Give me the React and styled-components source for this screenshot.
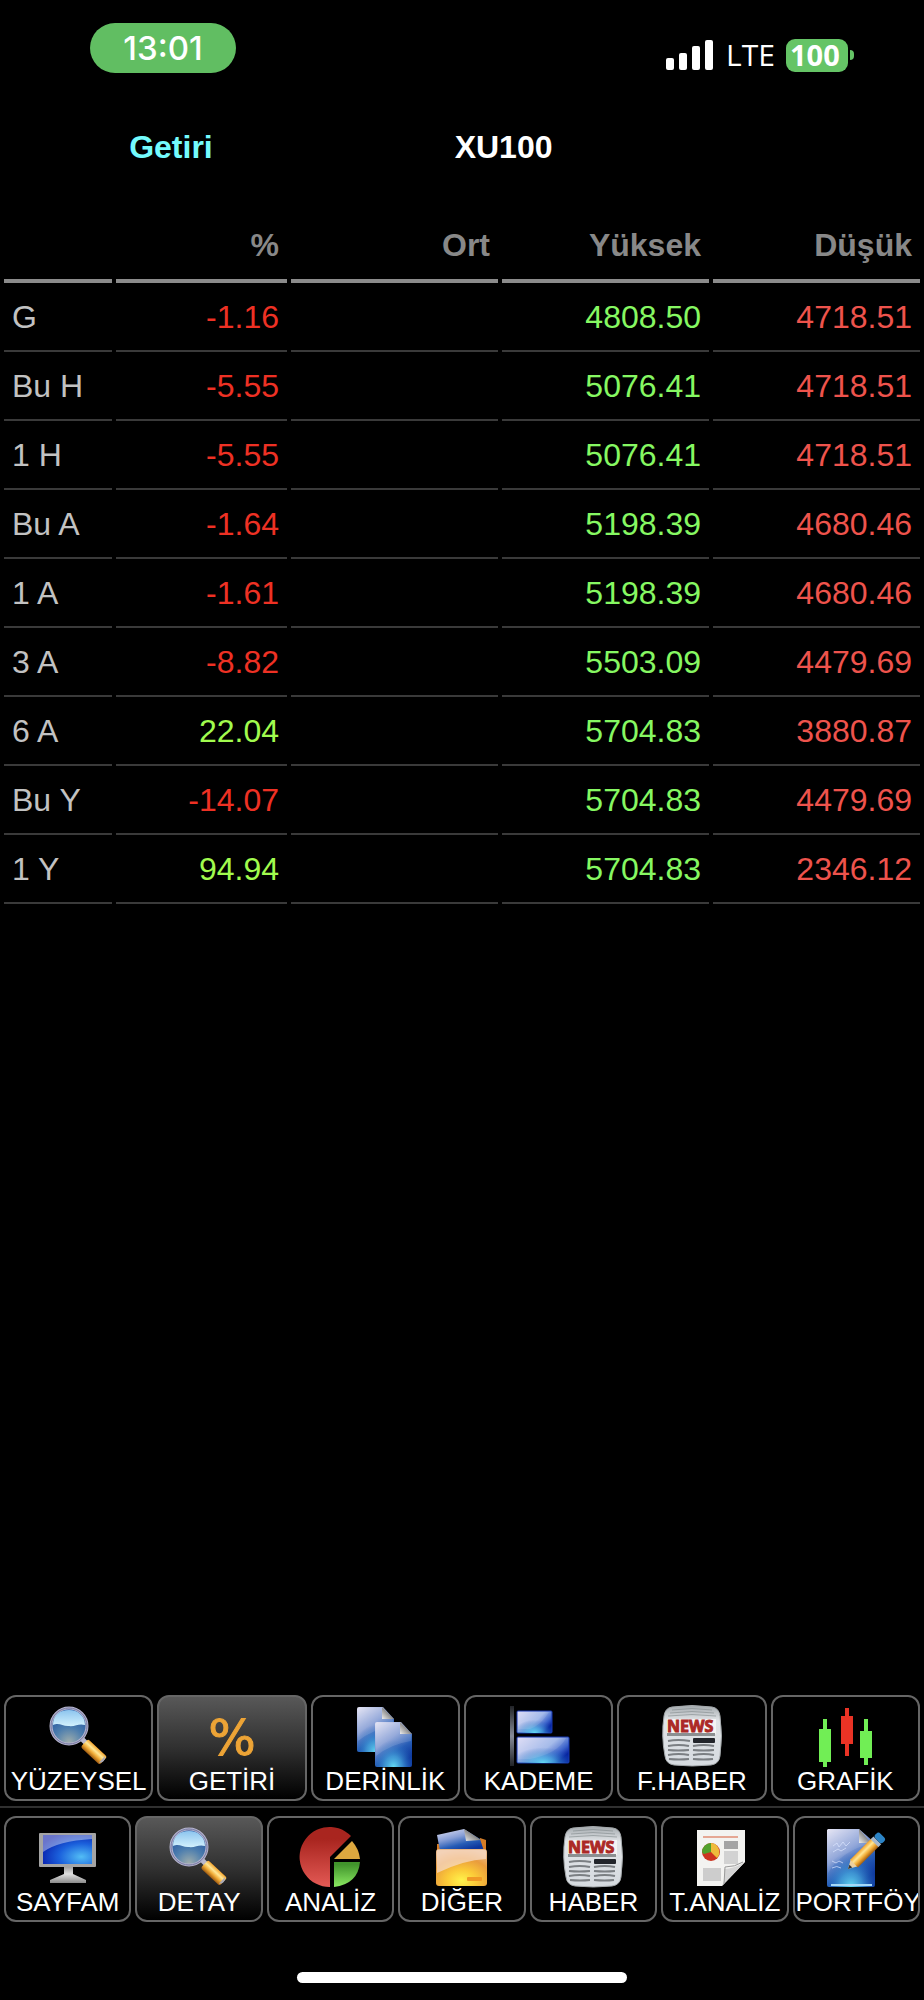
import React from "react";
import styled, { createGlobalStyle } from "styled-components";

const GlobalStyle = createGlobalStyle`
  * { box-sizing: border-box; }
  body {
    margin: 0;
    background: #000;
    color: #fff;
    font-family: "Liberation Sans", Arial, sans-serif;
  }
`;

const Screen = styled.div`
  display: flex;
  flex-direction: column;
  min-height: 100vh;
  padding-bottom: 17px;
`;

const StatusBar = styled.div`
  display: flex;
  justify-content: space-between;
  align-items: flex-start;
  height: 112px;
  padding: 23px 70px 0 90px;
  font-family: Inter, sans-serif;
`;

const Clock = styled.time`
  display: flex;
  align-items: center;
  justify-content: center;
  width: 146px;
  height: 50px;
  border-radius: 25px;
  background: #61be62;
  font-size: 33px;
  font-weight: 500;
`;

const StatusItems = styled.div`
  display: flex;
  align-items: center;
  padding-top: 15px;
`;

const SignalBars = styled.svg`
  width: 48px;
  height: 32px;
  margin-right: 12px;
`;

const Network = styled.span`
  width: 60px;
  font-family: "Open Sans", sans-serif;
  font-size: 30px;
  font-weight: 500;
  line-height: 34px;
`;

const Battery = styled.span`
  height: 33px;
  width: 62px;
  padding-left: 4px;
  border-radius: 9px;
  background: #65c466;
  font-family: "Open Sans", sans-serif;
  font-size: 29px;
  font-weight: 700;
  line-height: 32px;
`;

const BatteryTip = styled.span`
  width: 4px;
  height: 10px;
  margin-left: 2px;
  border-radius: 0 4px 4px 0;
  background: #65c466;
`;

const TitleBar = styled.header`
  display: grid;
  grid-template-columns: 37% 35% 28%;
  justify-items: center;
  align-items: center;
  height: 70px;
  line-height: 38px;
`;

const BackLink = styled.a`
  color: #74fbfd;
  font-size: 32px;
  font-weight: 700;
  text-decoration: none;
`;

const Title = styled.h1`
  margin: 0;
  font-size: 32px;
  font-weight: 700;
`;

const ReturnsTable = styled.table`
  width: 100%;
  margin-top: 30px;
  table-layout: fixed;
  border-collapse: separate;
  border-spacing: 4px 0;
  font-size: 32px;
  line-height: 37px;
`;

const Column = styled.col`
  width: ${(p) => p.$share};
`;

const HeadCell = styled.th`
  height: 71px;
  padding: 0 8px;
  border-bottom: 4px solid #8b8b8b;
  color: #888;
  text-align: right;
  vertical-align: middle;
`;

const PeriodCell = styled.th`
  height: 69px;
  padding: 2px 8px 0;
  border-bottom: 2px solid #3a3a3a;
  color: #c2c2c2;
  font-weight: 400;
  text-align: left;
  white-space: nowrap;
`;

const tones = {
  down: "#ee3124",
  up: "#a1fb4e",
  high: "#86f862",
  low: "#ee534c",
};

const ValueCell = styled.td`
  height: 69px;
  padding: 2px 8px 0;
  border-bottom: 2px solid #3a3a3a;
  color: ${(p) => tones[p.$tone] || "inherit"};
  text-align: right;
`;

const Navigation = styled.div`
  margin-top: auto;
`;

const Toolbar = styled.nav`
  display: flex;
  gap: 4px;
  padding: 0 4px;
`;

const Divider = styled.hr`
  height: 2px;
  margin: 5px 0 8px;
  border: 0;
  background: #303030;
`;

const ToolButton = styled.button`
  display: flex;
  flex: 1 1 0;
  flex-direction: column;
  align-items: center;
  min-width: 0;
  height: 106px;
  padding: 8px 0 0;
  overflow: hidden;
  border: 2px solid #666;
  border-radius: 12px;
  background: ${(p) => (p.$active ? "linear-gradient(#585858, #303030 50%, #000)" : "#000")};
  color: #fff;
  font: inherit;
`;

const ToolLabel = styled.span`
  width: 100%;
  padding: 0 1px;
  font-size: 26px;
  line-height: 30px;
  text-align: center;
  white-space: nowrap;
`;

const IconArt = styled.svg`
  display: block;
  flex: none;
  width: 60px;
  height: 61px;
  overflow: visible;
`;

const PercentMark = styled.span`
  height: 61px;
  color: #eda436;
  font-family: "DejaVu Sans", sans-serif;
  font-size: 50px;
  line-height: 66px;
  -webkit-text-stroke: 1px #eda436;
`;

const HomeIndicator = styled.div`
  width: 330px;
  height: 11px;
  margin: 50px auto 0;
  border-radius: 6px;
  background: #fff;
`;

const Icon = ({ children }) => (
  <IconArt viewBox="0 0 60 61" aria-hidden="true">{children}</IconArt>
);

const SharedGradients = () => (
  <svg width="0" height="0" display="block" aria-hidden="true">
    <defs>
      <linearGradient id="sky" x1="0" y1="0" x2="0" y2="1">
        <stop offset="0" stopColor="#8cc4ee" />
        <stop offset="1" stopColor="#d2f1fd" />
      </linearGradient>
      <radialGradient id="lens" cx="0.5" cy="0.95" r="0.9">
        <stop offset="0" stopColor="#a0aeac" />
        <stop offset="0.45" stopColor="#4d7eae" />
        <stop offset="1" stopColor="#1d4c9c" />
      </radialGradient>
      <linearGradient id="handle" x1="0" y1="0" x2="0" y2="1">
        <stop offset="0" stopColor="#f3a32c" />
        <stop offset="0.35" stopColor="#ffe795" />
        <stop offset="0.65" stopColor="#f1ac37" />
        <stop offset="1" stopColor="#9f5b11" />
      </linearGradient>
      <linearGradient id="bluePage" x1="0" y1="0" x2="0.55" y2="1">
        <stop offset="0" stopColor="#e5e4f4" />
        <stop offset="0.45" stopColor="#889fd6" />
        <stop offset="0.75" stopColor="#265cb5" />
        <stop offset="1" stopColor="#0d369c" />
      </linearGradient>
      <radialGradient id="cyanGlow" cx="0.5" cy="1" r="0.6">
        <stop offset="0" stopColor="#65dcf4" />
        <stop offset="0.4" stopColor="#4bb0e2" stopOpacity="0.7" />
        <stop offset="1" stopColor="#1850b4" stopOpacity="0" />
      </radialGradient>
      <linearGradient id="curl" x1="1" y1="0" x2="0" y2="1">
        <stop offset="0.4" stopColor="#777" />
        <stop offset="1" stopColor="#eee" />
      </linearGradient>
      <linearGradient id="bar" x1="0" y1="0" x2="1" y2="0.6">
        <stop offset="0" stopColor="#dedcf5" />
        <stop offset="0.6" stopColor="#9cb4e8" />
        <stop offset="0.85" stopColor="#3c63cb" />
        <stop offset="1" stopColor="#0623a1" />
      </linearGradient>
      <linearGradient id="axis" x1="0" y1="0" x2="0" y2="1">
        <stop offset="0" stopColor="#222428" />
        <stop offset="0.5" stopColor="#868b98" />
        <stop offset="1" stopColor="#222428" />
      </linearGradient>
      <linearGradient id="paperGrey" x1="0" y1="0" x2="0" y2="1">
        <stop offset="0" stopColor="#a4aaae" />
        <stop offset="0.25" stopColor="#e2e5e8" />
        <stop offset="1" stopColor="#d5dadf" />
      </linearGradient>
      <radialGradient id="display" cx="0.78" cy="0.75" r="0.9">
        <stop offset="0" stopColor="#52bdf5" />
        <stop offset="0.5" stopColor="#1b61dc" />
        <stop offset="1" stopColor="#0719a8" />
      </radialGradient>
      <linearGradient id="metal" x1="0" y1="0" x2="0" y2="1">
        <stop offset="0" stopColor="#8c8c8c" />
        <stop offset="0.5" stopColor="#e0e0e0" />
        <stop offset="1" stopColor="#8b8b8b" />
      </linearGradient>
      <linearGradient id="pieRed" x1="0" y1="0" x2="0" y2="1">
        <stop offset="0.2" stopColor="#a9251f" />
        <stop offset="1" stopColor="#e35a55" />
      </linearGradient>
      <linearGradient id="pieGreen" x1="0" y1="0" x2="0" y2="1">
        <stop offset="0.1" stopColor="#41942c" />
        <stop offset="1" stopColor="#8bea62" />
      </linearGradient>
      <radialGradient id="folder" cx="0.5" cy="0.85" r="0.85">
        <stop offset="0" stopColor="#fff34b" />
        <stop offset="0.35" stopColor="#fbc938" />
        <stop offset="0.7" stopColor="#e99c3d" />
        <stop offset="1" stopColor="#e9b888" />
      </radialGradient>
    </defs>
  </svg>
);

const MagnifierIcon = () => (
  <Icon>
    <path d="M33 34l6 6" stroke="#b9b8cd" strokeWidth="5" />
    <g transform="translate(35 37) rotate(43)">
      <rect x="1" y="-5" width="26" height="11" rx="2" fill="url(#handle)" />
      <path d="M25-4q5 5 0 9z" fill="#a8a7b6" />
    </g>
    <circle cx="20" cy="21" r="18" fill="url(#lens)" stroke="#b4b3cc" strokeWidth="3" />
    <path d="M4 20C4 10 11 5 20 5s16 6 16 15c-7-2-9 2-17 1-6 0-9-4-15-1z" fill="url(#sky)" />
    <circle cx="20" cy="21" r="18" fill="none" stroke="#7679a3" strokeWidth="1" />
  </Icon>
);

const PagesIcon = () => (
  <Icon>
    {["translate(2 2)", "translate(20 17)"].map((place) => (
      <g key={place} transform={place}>
        <path d="M2 0h24l11 12v31q0 2-2 2H2q-2 0-2-2V2q0-2 2-2z" fill="url(#bluePage)" />
        <path d="M2 0h24l11 12v31q0 2-2 2H2q-2 0-2-2V2q0-2 2-2z" fill="url(#cyanGlow)" />
        <path d="M1 1h24l11 12v6Q16 22 1 34z" fill="#fff" opacity="0.12" />
        <path d="M25 0l12 12H25z" fill="url(#curl)" />
      </g>
    ))}
  </Icon>
);

const BarsIcon = () => (
  <Icon>
    <rect x="1" y="1" width="4" height="60" fill="url(#axis)" />
    {[[6, 35, 22], [32, 52, 26]].map(([y, w, h]) => (
      <g key={y}>
        <rect x="8" y={y} width={w} height={h} rx="1" fill="url(#bar)" stroke="#1737b0" />
        <rect x="8" y={y} width={w} height={h} rx="1" fill="url(#cyanGlow)" />
        <path d={`M9 ${y + 1}h${w - 4}q-8 ${h * 0.6}-${w - 16} ${h - 5}H9z`} fill="#fff" opacity="0.1" />
      </g>
    ))}
  </Icon>
);

const NewsIcon = () => (
  <Icon>
    <path d="M10 2q20-3 40 0 7 1 8 9 3 20 0 40-1 8-9 9-19 2-37 0-8-1-9-9-4-20-1-40 1-8 8-9z" fill="url(#paperGrey)" stroke="#a4a9ac" strokeWidth="1" />
    <path d="M10 5q20-3 40 0M8 8q22-3 44 0M6 11q24-3 48 0" fill="none" stroke="#81888b" strokeWidth="1" opacity="0.6" />
    <path d="M5 14h49v15H5z" fill="#f4f4f4" />
    <text x="5" y="27" fill="#ac2926" stroke="#ac2926" strokeWidth="1" fontFamily="Open Sans, sans-serif" fontSize="16" fontWeight="700">NEWS</text>
    <rect x="5" y="28" width="48" height="3" fill="#8b8f91" />
    <rect x="31" y="33" width="22" height="5" rx="1" fill="#22252b" />
    <path d="M6 36q10-2 22 0M6 41q11-2 21 0M6 45q10 1 21 0M6 50q11-2 21 0M7 54q10 1 20 0M31 41q11-2 21 0M31 45q11 1 21 0M31 50q11-2 21 0M31 54q11 1 20 0" fill="none" stroke="#7b7f83" strokeWidth="2" />
  </Icon>
);

const CandlesIcon = () => (
  <Icon>
    <path d="M4 24h4V14h4v10h4v33h-4v5H8v-5H4zM45 26h4V14h4v12h4v27h-4v7h-4v-7h-4z" fill="#71ee55" />
    <path d="M26 11h4V3h4v8h4v28h-4v12h-4V39h-4z" fill="#ea3325" />
  </Icon>
);

const MonitorIcon = () => (
  <Icon>
    <path d="M26 39h9v9l13 6v3H12v-3l14-6z" fill="url(#metal)" />
    <rect x="1" y="7" width="57" height="34" rx="1" fill="#a4a4a4" />
    <rect x="5" y="9" width="49" height="29" fill="url(#display)" />
    <path d="M5 9h49v4Q20 15 5 26z" fill="#fff" opacity="0.4" />
  </Icon>
);

const PieIcon = () => (
  <Icon>
    <path d="M29 31V61A30 30 0 1 1 50 10z" fill="url(#pieRed)" />
    <path d="M33 33L51 15Q58 23 59 33z" fill="#dda83f" />
    <path d="M33 36h26q-2 22-26 25z" fill="url(#pieGreen)" />
  </Icon>
);

const FolderIcon = () => (
  <Icon>
    <path d="M5 18h4v8H5zM48 12l6 2v12h-8z" fill="#d77d25" />
    <path d="M5 9L32 3l16 10 4 12H8z" fill="url(#bluePage)" />
    <path d="M32 3l17 11-15 1z" fill="url(#curl)" />
    <rect x="4" y="23" width="51" height="37" rx="3" fill="url(#folder)" />
    <path d="M5 24h49v9Q32 34 5 47z" fill="#f6ddcc" opacity="0.7" />
    <rect x="35" y="51" width="15" height="4" rx="1" fill="#f09a26" />
  </Icon>
);

const ReportIcon = () => (
  <Icon>
    <path d="M2 4h48v32L27 60H2z" fill="#f3f3f1" />
    <path d="M27 60q4-8 2-17 10 0 21-7z" fill="#d5d5d5" />
    <path d="M29 58l1-17q10 0 18-5" fill="none" stroke="#999" strokeWidth="1" />
    <path d="M8 11h35" stroke="#e5a794" strokeWidth="2" />
    <rect x="29" y="15" width="14" height="8" fill="#a4a4a4" />
    <rect x="29" y="25" width="14" height="13" fill="#d2d2d2" />
    <rect x="8" y="42" width="18" height="13" fill="#cdcdcd" />
    <circle cx="16" cy="26" r="9" fill="#cc3420" />
    <path d="M16 26V17a9 9 0 0 0-9 9q1 2 2 2z" fill="#51a12c" />
    <path d="M16 26V17a9 9 0 0 1 6 15z" fill="#eebb3b" />
  </Icon>
);

const NotePencilIcon = () => (
  <Icon>
    <path d="M2 3h31l16 14v42q0 2-2 2H3q-2 0-2-2V4z" fill="url(#bluePage)" />
    <path d="M2 3h31l16 14v42q0 2-2 2H3q-2 0-2-2V4z" fill="url(#cyanGlow)" />
    <path d="M1 4h32l13 13Q15 25 2 47z" fill="#fff" opacity="0.1" />
    <path d="M33 3l12 14H33z" fill="url(#curl)" />
    <path d="M7 20l4-3 2 4 4-5 3 4 4-4M7 26l5-3 3 2 5-3M6 35l4 2 3-2 4 2M6 42q5-3 9 0" fill="none" stroke="#dce6ff" strokeWidth="1" opacity="0.7" />
    <path d="M5 59h41" stroke="#a5d9f8" strokeWidth="2" />
    <g transform="translate(22 43) rotate(-45)">
      <path d="M0 0l9-5v10z" fill="#edd0a0" />
      <path d="M0 0l4-2v4z" fill="#343434" />
      <rect x="8" y="-5" width="30" height="11" fill="url(#handle)" />
      <rect x="37" y="-5" width="4" height="11" fill="#a9b9cc" />
      <rect x="41" y="-5" width="7" height="11" rx="3" fill="#2c84c6" />
    </g>
  </Icon>
);

const PercentIcon = () => <PercentMark aria-hidden="true">%</PercentMark>;

const rows = [
  ["G", "-1.16", "4808.50", "4718.51"],
  ["Bu H", "-5.55", "5076.41", "4718.51"],
  ["1 H", "-5.55", "5076.41", "4718.51"],
  ["Bu A", "-1.64", "5198.39", "4680.46"],
  ["1 A", "-1.61", "5198.39", "4680.46"],
  ["3 A", "-8.82", "5503.09", "4479.69"],
  ["6 A", "22.04", "5704.83", "3880.87"],
  ["Bu Y", "-14.07", "5704.83", "4479.69"],
  ["1 Y", "94.94", "5704.83", "2346.12"],
];

const detailTools = [
  ["YÜZEYSEL", MagnifierIcon],
  ["GETİRİ", PercentIcon],
  ["DERİNLİK", PagesIcon],
  ["KADEME", BarsIcon],
  ["F.HABER", NewsIcon],
  ["GRAFİK", CandlesIcon],
];

const mainTools = [
  ["SAYFAM", MonitorIcon],
  ["DETAY", MagnifierIcon],
  ["ANALİZ", PieIcon],
  ["DİĞER", FolderIcon],
  ["HABER", NewsIcon],
  ["T.ANALİZ", ReportIcon],
  ["PORTFÖY", NotePencilIcon],
];

const ToolRow = ({ tools, active, label }) => (
  <Toolbar aria-label={label}>
    {tools.map(([name, Art]) => (
      <ToolButton key={name} type="button" $active={name === active} aria-pressed={name === active}>
        <Art />
        <ToolLabel>{name}</ToolLabel>
      </ToolButton>
    ))}
  </Toolbar>
);

export default function App() {
  return (
    <Screen lang="tr">
      <GlobalStyle />
      <SharedGradients />
      <StatusBar>
        <Clock>13:01</Clock>
        <StatusItems>
          <SignalBars viewBox="0 0 48 32" fill="#fff" aria-hidden="true">
            <rect x="0" y="19" width="8" height="12" rx="2" />
            <rect x="13" y="14" width="8" height="17" rx="2" />
            <rect x="26" y="7" width="8" height="24" rx="2" />
            <rect x="39" y="1" width="8" height="30" rx="2" />
          </SignalBars>
          <Network>LTE</Network>
          <Battery>100</Battery>
          <BatteryTip />
        </StatusItems>
      </StatusBar>
      <TitleBar>
        <BackLink href="#getiri">Getiri</BackLink>
        <Title>XU100</Title>
      </TitleBar>
      <ReturnsTable>
        <colgroup>
          <Column $share="12%" />
          <Column $share="19%" />
          <Column $share="23%" />
          <Column $share="23%" />
          <Column $share="23%" />
        </colgroup>
        <thead>
          <tr>
            <HeadCell scope="col" />
            <HeadCell scope="col">%</HeadCell>
            <HeadCell scope="col">Ort</HeadCell>
            <HeadCell scope="col">Yüksek</HeadCell>
            <HeadCell scope="col">Düşük</HeadCell>
          </tr>
        </thead>
        <tbody>
          {rows.map(([period, change, high, low]) => (
            <tr key={period}>
              <PeriodCell scope="row">{period}</PeriodCell>
              <ValueCell $tone={change.startsWith("-") ? "down" : "up"}>{change}</ValueCell>
              <ValueCell />
              <ValueCell $tone="high">{high}</ValueCell>
              <ValueCell $tone="low">{low}</ValueCell>
            </tr>
          ))}
        </tbody>
      </ReturnsTable>
      <Navigation>
        <ToolRow tools={detailTools} active="GETİRİ" label="Detay" />
        <Divider />
        <ToolRow tools={mainTools} active="DETAY" label="Menü" />
      </Navigation>
      <HomeIndicator />
    </Screen>
  );
}
